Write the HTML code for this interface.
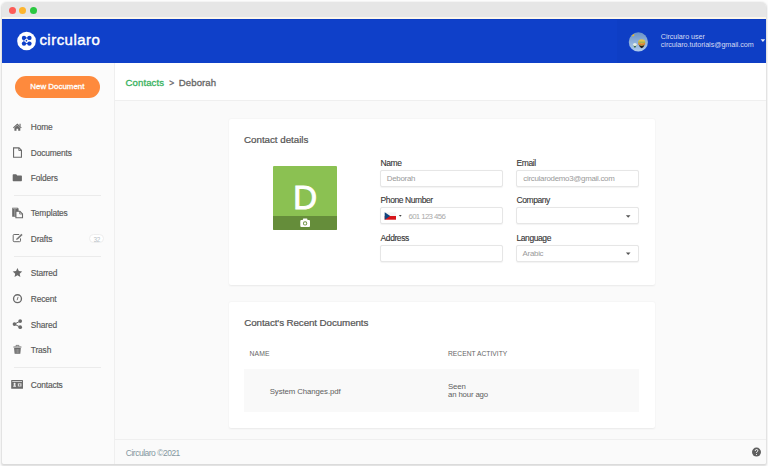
<!DOCTYPE html>
<html><head><meta charset="utf-8">
<style>
*{margin:0;padding:0;box-sizing:border-box}
html,body{width:768px;height:466px;overflow:hidden;background:#fdfdfd;font-family:"Liberation Sans",sans-serif}
.b{position:absolute}
.t{position:absolute;white-space:nowrap}
.card{position:absolute;background:#fff;border-radius:2px;box-shadow:0 0.5px 2px rgba(0,0,0,0.07)}
.inp{position:absolute;border:1px solid #e6e6e6;border-radius:2px;background:#fff;box-shadow:0 0.5px 1px rgba(0,0,0,0.05)}
.div{position:absolute;height:1px;background:#ebebeb}
</style></head><body>
<div class="b" style="left:2px;top:2px;width:764px;height:461.5px;border-radius:5px 5px 2.5px 2.5px;background:#f8f8f8;box-shadow:0 0.6px 2px 0.6px rgba(0,0,0,0.14);overflow:hidden"><div class="b" style="left:0;top:0;width:764px;height:15px;background:#e6e6e6"></div><div class="b" style="left:0;top:15px;width:764px;height:1.5px;background:#fbf6ec"></div></div>
<div class="b" style="left:8.9px;top:7px;width:7px;height:7px;border-radius:50%;background:#fd5b57"></div><div class="b" style="left:19.3px;top:7px;width:7px;height:7px;border-radius:50%;background:#fdb52e"></div><div class="b" style="left:29.9px;top:7px;width:7px;height:7px;border-radius:50%;background:#2bc840"></div><div class="b" style="left:2px;top:18.5px;width:764px;height:44px;background:#0f40c9"></div>
<div class="b" style="left:617.3px;top:18.5px;width:148.7px;height:44px;background:#0e3ec5"></div>
<div class="b" style="left:2px;top:18.5px;width:764px;height:1px;background:#0b3bc2"></div>
<div class="b" style="left:2px;top:62.5px;width:112.5px;height:401px;background:#fbfbfb;border-right:1px solid #efefef;border-bottom-left-radius:2.5px"></div>
<div class="b" style="left:114.5px;top:62.5px;width:651.5px;height:401px;background:#fafafa;border-bottom-right-radius:2.5px"></div>
<div class="b" style="left:114.5px;top:62.5px;width:651.5px;height:38.5px;background:#fff;border-bottom:1px solid #efefef"></div>
<div class="b" style="left:114.5px;top:438.5px;width:651.5px;height:25px;background:#fafafa;border-top:1px solid #efefef;border-bottom-right-radius:2.5px"></div>
<div class="card" style="left:228.8px;top:119px;width:426.3px;height:166.2px"></div>
<div class="card" style="left:228.8px;top:302.15px;width:426.3px;height:125.8px"></div>
<div class="t" style="left:39.40px;top:32.40px;font-size:15px;line-height:15px;color:#fff;font-weight:normal;letter-spacing:0.47px;-webkit-text-stroke:0.42px #fff;">circularo</div>
<div class="t" style="left:660.80px;top:33.31px;font-size:7.2px;line-height:7.2px;color:#d5dcf3;font-weight:normal;letter-spacing:-0.05px;">Circularo user</div>
<div class="t" style="left:660.80px;top:40.81px;font-size:7.2px;line-height:7.2px;color:#d5dcf3;font-weight:normal;letter-spacing:-0.05px;">circularo.tutorials@gmail.com</div>
<div class="b" style="left:15px;top:76px;width:85px;height:22px;border-radius:11px;background:#fe8a3d"></div><div class="t" style="left:30.30px;top:83.21px;font-size:7.9px;line-height:7.9px;color:#fff;font-weight:normal;letter-spacing:0.02px;-webkit-text-stroke:0.3px #fff;">New Document</div>
<div class="t" style="left:30.80px;top:123.49px;font-size:8.4px;line-height:8.4px;color:#585858;font-weight:normal;letter-spacing:-0.15px;-webkit-text-stroke:0.15px #585858;">Home</div>
<div class="t" style="left:30.80px;top:149.09px;font-size:8.4px;line-height:8.4px;color:#585858;font-weight:normal;letter-spacing:-0.15px;-webkit-text-stroke:0.15px #585858;">Documents</div>
<div class="t" style="left:30.80px;top:174.49px;font-size:8.4px;line-height:8.4px;color:#585858;font-weight:normal;letter-spacing:-0.15px;-webkit-text-stroke:0.15px #585858;">Folders</div>
<div class="t" style="left:30.80px;top:209.29px;font-size:8.4px;line-height:8.4px;color:#585858;font-weight:normal;letter-spacing:-0.15px;-webkit-text-stroke:0.15px #585858;">Templates</div>
<div class="t" style="left:30.80px;top:234.89px;font-size:8.4px;line-height:8.4px;color:#585858;font-weight:normal;letter-spacing:-0.15px;-webkit-text-stroke:0.15px #585858;">Drafts</div>
<div class="t" style="left:30.80px;top:269.49px;font-size:8.4px;line-height:8.4px;color:#585858;font-weight:normal;letter-spacing:-0.15px;-webkit-text-stroke:0.15px #585858;">Starred</div>
<div class="t" style="left:30.80px;top:295.29px;font-size:8.4px;line-height:8.4px;color:#585858;font-weight:normal;letter-spacing:-0.15px;-webkit-text-stroke:0.15px #585858;">Recent</div>
<div class="t" style="left:30.80px;top:320.89px;font-size:8.4px;line-height:8.4px;color:#585858;font-weight:normal;letter-spacing:-0.15px;-webkit-text-stroke:0.15px #585858;">Shared</div>
<div class="t" style="left:30.80px;top:346.39px;font-size:8.4px;line-height:8.4px;color:#585858;font-weight:normal;letter-spacing:-0.15px;-webkit-text-stroke:0.15px #585858;">Trash</div>
<div class="t" style="left:30.80px;top:381.09px;font-size:8.4px;line-height:8.4px;color:#585858;font-weight:normal;letter-spacing:-0.15px;-webkit-text-stroke:0.15px #585858;">Contacts</div>
<div class="div" style="left:13.8px;top:195.0px;width:87.5px"></div><div class="div" style="left:13.8px;top:255.5px;width:87.5px"></div><div class="div" style="left:13.8px;top:366.8px;width:87.5px"></div><div class="b" style="left:89.2px;top:234.1px;width:14.4px;height:9.2px;border-radius:4.6px;background:#fff;border:1px solid #eeeeee"></div><div class="t" style="left:93.60px;top:236.78px;font-size:6.4px;line-height:6.4px;color:#b9bfc6;font-weight:normal;letter-spacing:-0.3px;">32</div>
<div class="t" style="left:125.60px;top:78.47px;font-size:9.6px;line-height:9.6px;color:#38b260;font-weight:normal;letter-spacing:0.08px;-webkit-text-stroke:0.3px #38b260;">Contacts</div>
<div class="t" style="left:169.20px;top:78.90px;font-size:8.5px;line-height:8.5px;color:#666;font-weight:normal;letter-spacing:0px;-webkit-text-stroke:0.3px #666;">&gt;</div>
<div class="t" style="left:178.80px;top:78.47px;font-size:9.6px;line-height:9.6px;color:#666666;font-weight:normal;letter-spacing:0.08px;-webkit-text-stroke:0.3px #666666;">Deborah</div>
<div class="t" style="left:244.00px;top:135.10px;font-size:9.8px;line-height:9.8px;color:#555;font-weight:normal;letter-spacing:-0.03px;-webkit-text-stroke:0.22px #555;">Contact details</div>
<div class="b" style="left:273.2px;top:165.9px;width:63.8px;height:63.8px;background:#8bc152;border-radius:1px;overflow:hidden"><div class="b" style="left:0;top:50.1px;width:63.8px;height:13.7px;background:#658d3a"></div></div><div class="t" style="left:292.90px;top:180.74px;font-size:33.5px;line-height:33.5px;color:#fff;font-weight:normal;letter-spacing:0px;-webkit-text-stroke:0.8px #fff;">D</div>
<div class="t" style="left:380.60px;top:159.40px;font-size:8.5px;line-height:8.5px;color:#353535;font-weight:normal;letter-spacing:-0.42px;-webkit-text-stroke:0.12px #353535;">Name</div>
<div class="t" style="left:516.50px;top:159.40px;font-size:8.5px;line-height:8.5px;color:#353535;font-weight:normal;letter-spacing:-0.42px;-webkit-text-stroke:0.12px #353535;">Email</div>
<div class="t" style="left:380.60px;top:196.40px;font-size:8.5px;line-height:8.5px;color:#353535;font-weight:normal;letter-spacing:-0.42px;-webkit-text-stroke:0.12px #353535;">Phone Number</div>
<div class="t" style="left:516.50px;top:196.40px;font-size:8.5px;line-height:8.5px;color:#353535;font-weight:normal;letter-spacing:-0.42px;-webkit-text-stroke:0.12px #353535;">Company</div>
<div class="t" style="left:380.60px;top:233.90px;font-size:8.5px;line-height:8.5px;color:#353535;font-weight:normal;letter-spacing:-0.42px;-webkit-text-stroke:0.12px #353535;">Address</div>
<div class="t" style="left:516.50px;top:233.90px;font-size:8.5px;line-height:8.5px;color:#353535;font-weight:normal;letter-spacing:-0.42px;-webkit-text-stroke:0.12px #353535;">Language</div>
<div class="inp" style="left:380.3px;top:170.1px;width:122.6px;height:17px"></div><div class="inp" style="left:380.3px;top:207.4px;width:122.6px;height:17px"></div><div class="inp" style="left:380.3px;top:244.7px;width:122.6px;height:17px"></div><div class="inp" style="left:516px;top:170.1px;width:122.6px;height:17px"></div><div class="inp" style="left:516px;top:207.4px;width:122.6px;height:17px"></div><div class="inp" style="left:516px;top:244.7px;width:122.6px;height:17px"></div><div class="t" style="left:386.80px;top:174.91px;font-size:7.9px;line-height:7.9px;color:#9a9a9a;font-weight:normal;letter-spacing:-0.28px;">Deborah</div>
<div class="t" style="left:523.30px;top:174.91px;font-size:7.9px;line-height:7.9px;color:#9a9a9a;font-weight:normal;letter-spacing:-0.28px;">circularodemo3@gmail.com</div>
<div class="t" style="left:408.40px;top:212.71px;font-size:7.9px;line-height:7.9px;color:#aaa;font-weight:normal;letter-spacing:-0.65px;">601 123 456</div>
<div class="t" style="left:522.60px;top:249.71px;font-size:7.9px;line-height:7.9px;color:#9a9a9a;font-weight:normal;letter-spacing:-0.28px;">Arabic</div>
<div class="t" style="left:244.30px;top:318.30px;font-size:9.8px;line-height:9.8px;color:#555;font-weight:normal;letter-spacing:-0.1px;-webkit-text-stroke:0.22px #555;">Contact's Recent Documents</div>
<div class="t" style="left:249.40px;top:350.84px;font-size:6.8px;line-height:6.8px;color:#666;font-weight:normal;letter-spacing:0.2px;">NAME</div>
<div class="t" style="left:448.00px;top:350.83px;font-size:6.7px;line-height:6.7px;color:#666;font-weight:normal;letter-spacing:0.02px;">RECENT ACTIVITY</div>
<div class="b" style="left:244px;top:369.3px;width:394.9px;height:43px;background:#f9f9f9"></div><div class="t" style="left:269.70px;top:388.40px;font-size:7.8px;line-height:7.8px;color:#606060;font-weight:normal;letter-spacing:-0.08px;">System Changes.pdf</div>
<div class="t" style="left:448.00px;top:382.60px;font-size:7.8px;line-height:7.8px;color:#606060;font-weight:normal;letter-spacing:-0.15px;">Seen</div>
<div class="t" style="left:448.00px;top:391.30px;font-size:7.8px;line-height:7.8px;color:#606060;font-weight:normal;letter-spacing:-0.15px;">an hour ago</div>
<div class="t" style="left:125.80px;top:448.80px;font-size:8.5px;line-height:8.5px;color:#8497a0;font-weight:normal;letter-spacing:-0.5px;">Circularo ©2021</div>
<svg class="b" style="left:0;top:0" width="768" height="466" viewBox="0 0 768 466"><circle cx="26.55" cy="41" r="9.35" fill="#fff"/><g fill="#0f40c9" stroke="#0f40c9"><circle cx="24.0" cy="37.9" r="2.2" stroke="none"/><circle cx="29.4" cy="37.9" r="2.2" stroke="none"/><circle cx="24.0" cy="43.6" r="2.2" stroke="none"/><circle cx="29.4" cy="43.6" r="2.2" stroke="none"/><path d="M24 37.9 H29.4 M24 37.9 V43.6 M24 43.6 H29.4" stroke-width="0.9" fill="none"/></g><circle cx="26.3" cy="40.7" r="1.75" fill="#fff"/><circle cx="26.4" cy="40.7" r="0.85" fill="#0f40c9"/><defs><linearGradient id="sky" x1="0" y1="0" x2="0" y2="1"><stop offset="0" stop-color="#6a92c6"/><stop offset="1" stop-color="#b4d0f0"/></linearGradient><clipPath id="avc"><circle cx="638.35" cy="41.95" r="9.6"/></clipPath></defs><g clip-path="url(#avc)"><rect x="628" y="32" width="21" height="21" fill="url(#sky)"/><ellipse cx="633.3" cy="35.3" rx="1.3" ry="0.9" transform="rotate(-35 633.3 35.3)" fill="#e6b830"/><path d="M638.6 44.2 Q639.6 47.6 641.7 48.2 Q643.8 47.6 644.8 44.2 Z" fill="#1e1a1c"/><ellipse cx="641.7" cy="42.5" rx="3.6" ry="3.2" fill="#e2c24a"/><path d="M638.2 42.2 H645.2" stroke="#7aa457" stroke-width="0.8"/><path d="M638.3 43.9 Q641.7 44.6 645.1 43.9" stroke="#d24a2a" stroke-width="0.9" fill="none"/><path d="M633.3 45.0 Q634.1 47.8 634.9 47.9 Q635.7 47.8 636.5 45.0 Z" fill="#3d6e48"/><ellipse cx="634.9" cy="44.4" rx="1.9" ry="1.5" fill="#e6efe6"/></g><path d="M760.6 39.3 H765.2 L762.9 42 Z" fill="#e6eaf7"/><circle cx="756.5" cy="452.1" r="4.5" fill="#5f5f5f"/><path d="M755.2 450.9 Q755.3 449.5 756.5 449.5 Q757.8 449.5 757.8 450.6 Q757.8 451.3 757.0 451.7 Q756.5 452.0 756.5 452.9" stroke="#fff" stroke-width="1.0" fill="none"/><circle cx="756.5" cy="454.5" r="0.55" fill="#fff"/><g fill="#6a6a6a" stroke="none"><path d="M13 127.6 L17.35 123.4 L21.7 127.6 L20.95 128.35 L17.35 124.9 L13.75 128.35 Z"/><path d="M14.4 128 L17.35 125.3 L20.3 128 V130.7 H18.2 V128.7 H16.5 V130.7 H14.4 Z"/><path d="M19.5 123.8 H20.6 V126.3 L19.5 125.3 Z"/><path d="M12.7 175 Q12.7 174.3 13.4 174.3 H16.2 L17.2 175.4 H21.2 Q21.9 175.4 21.9 176.1 V180.6 Q21.9 181.3 21.2 181.3 H13.4 Q12.7 181.3 12.7 180.6 Z"/><path d="M12.2 207.8 H17.8 L18.6 208.8 V216.8 H12.2 Z"/><rect x="14.2" y="208.9" width="1.3" height="7.6" fill="#9a9a9a"/><rect x="12.6" y="207.9" width="4.8" height="0.9" fill="#a8a8a8"/><path d="M17.45 268.00 L18.83 271.10 L22.21 271.45 L19.68 273.73 L20.39 277.05 L17.45 275.35 L14.51 277.05 L15.22 273.73 L12.69 271.45 L16.07 271.10 Z"/><circle cx="14.5" cy="324.1" r="1.85"/><circle cx="20.2" cy="321.1" r="1.85"/><circle cx="20.2" cy="327.2" r="1.85"/><rect x="13.4" y="346.4" width="8.1" height="1.2" rx="0.3"/><path d="M16 346.5 V345.4 H18.9 V346.5" stroke="#6a6a6a" stroke-width="0.8" fill="none"/><path d="M14.1 348.1 H20.8 L20.3 353.8 H14.6 Z"/><rect x="11.2" y="380" width="11.8" height="8.8" rx="0.5"/></g><g fill="none" stroke="#6a6a6a" stroke-width="1.1"><path d="M13.55 147.85 H19 L21.45 150.3 V157.25 H13.55 Z"/><path d="M18.8 148 V150.5 H21.3" stroke-width="0.9"/><path d="M15.9 211.3 H19.9 L22.5 213.9 V217.8 H15.9 Z" fill="#fafafa"/><path d="M19.7 211.4 V214 H22.4" stroke-width="0.8"/><path d="M19.2 234.5 H14.1 Q13.2 234.5 13.2 235.4 V240.8 Q13.2 241.7 14.1 241.7 H19.6 Q20.5 241.7 20.5 240.8 V238.4" stroke-width="1"/><path d="M17.2 239.0 L22.0 234.3" stroke-width="1.7" stroke="#777"/><path d="M16.1 239.9 L16.6 238.3 L17.8 239.5 Z" fill="#777" stroke="none"/><circle cx="17.5" cy="298.7" r="3.95" stroke-width="1.35"/><path d="M17.1 300.2 L18.1 296.9" stroke-width="0.9"/><path d="M14.5 324.1 L20.2 321.1 M14.5 324.1 L20.2 327.2" stroke-width="1"/></g><path d="M16.1 349 V353 M17.45 349 V353 M18.8 349 V353" stroke="#b9b9b9" stroke-width="0.5"/><rect x="12.3" y="381.1" width="9.7" height="0.8" fill="#e8e8e8"/><circle cx="14.6" cy="383.9" r="1.05" fill="#f2f2f2"/><path d="M13.1 386.8 Q13.1 384.9 14.6 384.9 Q16.1 384.9 16.1 386.8 Z" fill="#f2f2f2"/><rect x="17.8" y="383.3" width="3.7" height="3.2" fill="#d8d8d8"/><rect x="19" y="384.1" width="1.3" height="1.6" fill="#7a7a7a"/><g><rect x="300.3" y="220.0" width="9.7" height="7.0" rx="1" fill="#fff"/><rect x="302.9" y="218.5" width="4.5" height="2" rx="0.6" fill="#fff"/><circle cx="305.1" cy="223.4" r="2.1" fill="#658d3a"/><circle cx="305.1" cy="223.4" r="1.2" fill="#fff"/></g><rect x="384.7" y="212.3" width="11.3" height="3.7" fill="#f4f4f4"/><rect x="384.7" y="216" width="11.3" height="3.7" fill="#d7141a"/><path d="M384.7 212.3 L390.2 216 L384.7 219.7 Z" fill="#11457e"/><path d="M398.9 215 H401.7 L400.3 216.8 Z" fill="#444"/><path d="M625.9 215.2 H630.5 L628.2 217.8 Z" fill="#555"/><path d="M625.9 252.4 H630.5 L628.2 255 Z" fill="#555"/></svg>
</body></html>
